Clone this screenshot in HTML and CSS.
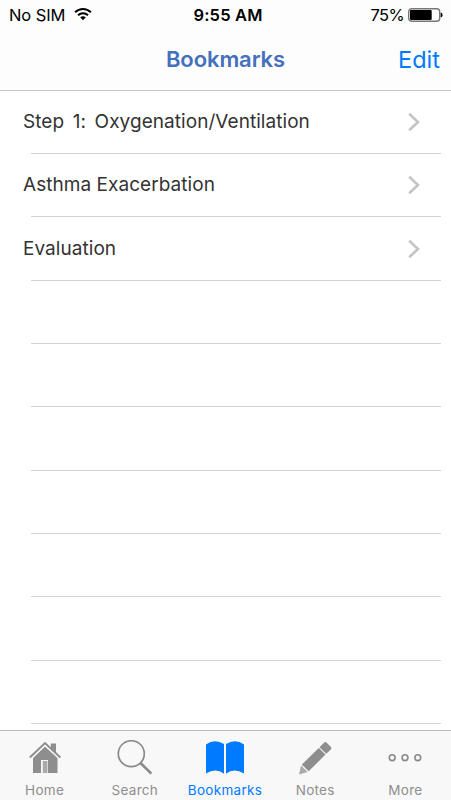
FILE: index.html
```html
<!DOCTYPE html>
<html lang="en">
<head>
<meta charset="utf-8">
<title>Bookmarks</title>
<link rel="stylesheet" href="styles.css">
</head>
<body>
<div class="app">
  <header class="top">
    <div class="status">
      <div class="carrier"><span class="sim">No SIM</span>
        <svg class="wifi" width="18" height="14" viewBox="0 0 18 14"><g fill="none" stroke="#000" stroke-width="2"><path d="M1.1 5.2C5.6.9 12.4.9 16.9 5.2"/><path d="M4 8.2C6.9 5.5 11.1 5.5 14 8.2"/></g><path d="M6.2 10.3C7.9 8.9 10.1 8.9 11.8 10.3L9 13.2Z"/></svg>
      </div>
      <div class="time">9:55 AM</div>
      <div class="power"><span class="percent">75%</span>
        <svg class="battery" width="35" height="14" viewBox="0 0 35 14"><rect x=".7" y=".7" width="31" height="12.6" rx="3" fill="#fff" stroke="#777" stroke-width="1.4"/><rect x="2" y="2" width="21.7" height="10" rx="1"/><path d="M32.7 4.7h.6q1.3.6 1.3 2.3t-1.3 2.3h-.6z"/></svg>
      </div>
    </div>
    <div class="nav"><span></span><h1 class="title">Bookmarks</h1><a class="edit">Edit</a></div>
  </header>
  <main class="list">
    <div class="row"><span class="label step">Step 1: Oxygenation/Ventilation</span><svg class="chevron" width="12" height="20" viewBox="0 0 12 20"><path d="M1.2 1.8L10 10L1.2 18.2"/></svg></div>
    <div class="row"><span class="label">Asthma Exacerbation</span><svg class="chevron" width="12" height="20" viewBox="0 0 12 20"><path d="M1.2 1.8L10 10L1.2 18.2"/></svg></div>
    <div class="row"><span class="label">Evaluation</span><svg class="chevron" width="12" height="20" viewBox="0 0 12 20"><path d="M1.2 1.8L10 10L1.2 18.2"/></svg></div>
    <div class="row"></div><div class="row"></div><div class="row"></div><div class="row"></div><div class="row"></div><div class="row"></div><div class="row"></div>
  </main>
  <nav class="tabs">
    <a class="tab"><svg width="36" height="36" viewBox="0 0 36 36" fill="#8e8e8e"><path d="M23.8 3.5h5.2v11l-5.2-5z"/><path d="M6 18L18 6.6L30.5 18v15H21V20h-7v13H6z"/><path d="M15.8 21h4.6v12h-4.6z" fill="#aaa"/><path d="M2.8 18.8L18 4.6L33.4 18.8" fill="none" stroke="#f8f8f8" stroke-width="2.6"/><path d="M2.8 17.5L18 3.1L33.4 17.5" fill="none" stroke="#8e8e8e" stroke-width="2"/></svg><span>Home</span></a>
    <a class="tab"><svg width="36" height="36" viewBox="0 0 36 36" fill="none" stroke="#8a8a8a"><circle cx="14.3" cy="13.7" r="13" stroke-width="1.7"/><path d="M23.5 23L34.3 33.6" stroke-width="2.7"/></svg><span>Search</span></a>
    <a class="tab active"><svg width="40" height="36" viewBox="0 0 40 36" fill="#007aff"><path d="M1 4.5Q9.5-1.8 19 4V33.8Q11 27.2 1 33.5z"/><path d="M21 4Q30.5-1.8 39 4.5V33.5Q29 27.2 21 33.8z"/></svg><span>Bookmarks</span></a>
    <a class="tab"><svg width="36" height="36" viewBox="0 0 36 36" fill="#8e8e8e"><path d="M22.5 7.3L27 2.8Q28.2 1.3 29.5 2.5L34 7Q35 8.2 33.8 9.4L29.2 13.8z"/><path d="M21.8 8L28.5 14.5L11.7 31.3L4.8 24.6z"/><path d="M4.1 25.6L10.7 32L2 34.4z" fill="#aaa"/></svg><span>Notes</span></a>
    <a class="tab"><svg width="36" height="36" viewBox="0 0 36 36" fill="none" stroke="#8a8a8a" stroke-width="1.6"><circle cx="5.2" cy="17.7" r="2.9"/><circle cx="18" cy="17.7" r="2.9"/><circle cx="30.8" cy="17.7" r="2.9"/></svg><span>More</span></a>
  </nav>
</div>
</body>
</html>
```
FILE: styles.css
```css
* { box-sizing: border-box; }
body { margin: 0; background: #fff; font-family: Inter, "Liberation Sans", sans-serif; }
.app { width: 451px; height: 800px; display: flex; flex-direction: column; overflow: hidden; }
.top { height: 90.7px; flex: none; background: #fdfdfd; border-bottom: 1px solid #c6c6c6; }
.status { height: 29px; display: grid; grid-template-columns: 1fr auto 1fr; align-items: center; padding: 0 8px 0 9px; font-size: 16.5px; color: #000; white-space: nowrap; }
.carrier, .power { display: flex; align-items: center; }
.carrier { gap: 9px; }
.wifi { margin-top: -2px; }
.power { justify-content: flex-end; gap: 4px; }
.sim { letter-spacing: -0.1px; }
.time { font-weight: 600; letter-spacing: 0.15px; padding-left: 4px; }
.percent { letter-spacing: -0.6px; }
.nav { height: 61px; display: grid; grid-template-columns: 1fr auto 1fr; align-items: center; padding: 0 11px; }
.title { margin: -1px 0 0; font-size: 22px; font-weight: 600; color: #4470bd; line-height: 28px; letter-spacing: -0.1px; }
.edit { justify-self: end; font-size: 23.5px; line-height: 28px; color: #007aff; }
.list { flex: 1; min-height: 0; overflow: hidden; }
.row { height: 63.35px; margin: 0 10px 0 31px; display: flex; align-items: center; justify-content: space-between; border-bottom: 1px solid #d2d2d2; padding-right: 21px; color: #333; }
.label { margin-left: -8px; font-size: 19px; line-height: 24px; letter-spacing: 0.05px; white-space: nowrap; }
.step { word-spacing: 3.2px; }
.chevron path { fill: none; stroke: #c4c4c7; stroke-width: 2.6; }
.tabs { height: 70px; flex: none; display: grid; grid-template-columns: repeat(5, 1fr); background: #f8f8f8; border-top: 1px solid #b9b9b9; }
.tab { display: flex; flex-direction: column; align-items: center; padding: 9px 1px 0 0; font-size: 13.5px; line-height: 16px; letter-spacing: 0.3px; color: #8e8e8e; }
.tab span { margin-top: 6px; }
.tab.active { color: #007aff; }
```
